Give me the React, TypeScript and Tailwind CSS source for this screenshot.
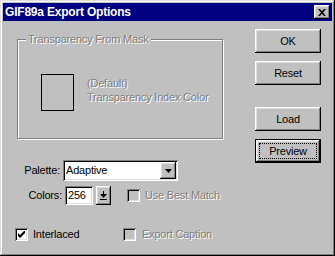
const raised = 'shadow-[inset_-1px_-1px_#000,inset_1px_1px_#fff,inset_-2px_-2px_#808080,inset_2px_2px_#dfdfdf]'
const sunken = 'shadow-[inset_1px_1px_#808080,inset_-1px_-1px_#fff,inset_2px_2px_#000,inset_-2px_-2px_#dfdfdf]'
const etched = 'text-[#808080] [text-shadow:1px_1px_0_#fff]'

function Button({ label, isDefault }: { label: string; isDefault?: boolean }) {
  return (
    <button
      className={
        'relative w-[66px] h-[24px] bg-[#c0c0c0] flex items-center justify-center leading-none ' +
        (isDefault
          ? 'shadow-[inset_0_0_0_1px_#000,inset_-2px_-2px_#000,inset_2px_2px_#fff,inset_-3px_-3px_#808080,inset_3px_3px_#dfdfdf]'
          : raised)
      }
    >
      {isDefault && <span className="absolute inset-[4px] border border-dotted border-black" />}
      <span className="relative">{label}</span>
    </button>
  )
}

function CheckBox({ checked, disabled }: { checked?: boolean; disabled?: boolean }) {
  return (
    <span className={`w-[13px] h-[13px] flex items-center justify-center shrink-0 ${sunken} ${disabled ? 'bg-[#c0c0c0]' : 'bg-white'}`}>
      {checked && (
        <svg width="7" height="7" viewBox="0 0 7 7">
          <path d="M0 2 L2 4 L7 -1 L7 2 L2 7 L0 5 Z" fill="#000" />
        </svg>
      )}
    </span>
  )
}

export default function App() {
  return (
    <div className="w-[335px] h-[256px] bg-[#c0c0c0] p-[3px] flex flex-col font-['Liberation_Sans',Arial,sans-serif] text-[11px] tracking-[-0.2px] text-black shadow-[inset_-1px_-1px_#000,inset_1px_1px_#dfdfdf,inset_-2px_-2px_#808080,inset_2px_2px_#fff]">
      {/* title bar */}
      <div className="h-[18px] bg-[#000080] flex items-center justify-between pl-[2px] pr-[2px]">
        <span className="text-white font-bold text-[12px] leading-none">GIF89a Export Options</span>
        <button className={`w-[16px] h-[14px] bg-[#c0c0c0] flex items-center justify-center ${raised}`}>
          <svg width="8" height="7" viewBox="0 0 8 7">
            <path d="M0 0 L2 0 L4 2.3 L6 0 L8 0 L5 3.5 L8 7 L6 7 L4 4.7 L2 7 L0 7 L3 3.5 Z" fill="#000" />
          </svg>
        </button>
      </div>

      <div className="flex flex-1">
        {/* left side */}
        <div className="ml-[12px] w-[209px] flex flex-col">
          <div className="relative ml-[2px] mt-[18px] w-[206px] h-[100px] border border-[#808080] shadow-[inset_1px_1px_#fff,1px_1px_#fff]">
            <span className={`absolute left-[8px] top-[-7px] bg-[#c0c0c0] px-[2px] leading-[13px] ${etched}`}>
              Transparency From Mask
            </span>
            <div className="flex items-start pl-[23px] pt-[34px] gap-[13px]">
              <div className="w-[33px] h-[37px] border border-black" />
              <div className={`mt-[2px] leading-[14px] ${etched}`}>
                (Default)
                <br />
                Transparency Index Color
              </div>
            </div>
          </div>

          <div className="flex items-center mt-[21px] gap-[3px]">
            <span className="w-[45px] text-right">Palette:</span>
            <div className={`w-[115px] h-[21px] bg-white flex items-center justify-between p-[2px] ${sunken}`}>
              <span className="pl-[1px]">Adaptive</span>
              <span className={`w-[16px] h-[17px] bg-[#c0c0c0] flex items-center justify-center ${raised}`}>
                <svg width="7" height="4" viewBox="0 0 7 4">
                  <path d="M0 0 L7 0 L3.5 4 Z" fill="#000" />
                </svg>
              </span>
            </div>
          </div>

          <div className="flex items-center mt-[5px]">
            <span className="w-[47px] text-right">Colors:</span>
            <div className={`ml-[3px] w-[28px] h-[19px] bg-white flex items-center pl-[3px] ${sunken}`}>256</div>
            <span className={`ml-[3px] w-[15px] h-[19px] bg-[#c0c0c0] flex items-center justify-center ${raised}`}>
              <svg width="7" height="10" viewBox="0 0 7 10">
                <rect x="3" y="0" width="1" height="3" fill="#000" />
                <path d="M0 3 L7 3 L3.5 7 Z" fill="#000" />
                <rect x="0" y="8" width="7" height="1" fill="#000" />
              </svg>
            </span>
            <span className="ml-[16px]">
              <CheckBox disabled />
            </span>
            <span className={`ml-[5px] ${etched}`}>Use Best Match</span>
          </div>

          <div className="flex items-center mt-[21px]">
            <div className="w-[108px] flex items-center gap-[5px]">
              <CheckBox checked />
              <span>Interlaced</span>
            </div>
            <div className="flex items-center gap-[6px]">
              <CheckBox disabled />
              <span className={etched}>Export Caption</span>
            </div>
          </div>
        </div>

        {/* right side buttons */}
        <div className="ml-[31px] flex flex-col">
          <div className="mt-[8px]"><Button label="OK" /></div>
          <div className="mt-[8px]"><Button label="Reset" /></div>
          <div className="mt-[22px]"><Button label="Load" /></div>
          <div className="mt-[8px]"><Button label="Preview" isDefault /></div>
        </div>
      </div>
    </div>
  )
}
